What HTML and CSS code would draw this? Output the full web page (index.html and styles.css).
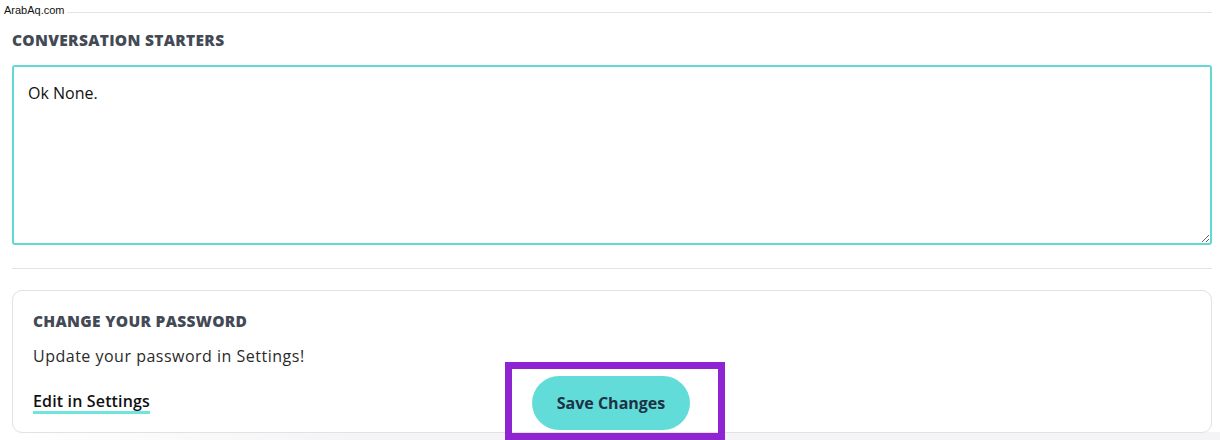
FILE: index.html
```html
<!DOCTYPE html>
<html>
<head>
<meta charset="utf-8">
<link rel="stylesheet" href="styles.css">
</head>
<body>
<div class="watermark">ArabAq.com</div>
<main class="page">
  <hr class="rule rule-top">
  <section class="starters">
    <h2 class="label">CONVERSATION STARTERS</h2>
    <textarea class="box">Ok None.</textarea>
  </section>
  <hr class="rule rule-mid">
  <section class="card">
    <h2 class="label">CHANGE YOUR PASSWORD</h2>
    <p class="desc">Update your password in Settings!</p>
    <a class="link" href="#">Edit in Settings</a>
  </section>
</main>
<div class="footer-shade"></div>
<button class="save">Save Changes</button>
<div class="highlight"></div>
</body>
</html>
```

FILE: styles.css
```css
html, body {
  margin: 0;
  padding: 0;
  background: #ffffff;
  height: 440px;
  overflow: hidden;
}
body {
  font-family: "Open Sans", "DejaVu Sans", sans-serif;
  color: #222;
  position: relative;
}
.watermark {
  position: absolute;
  left: 4px;
  top: 4px;
  font-family: "Liberation Sans", Arial, sans-serif;
  font-size: 11px;
  line-height: 13px;
  color: #111;
  background: #fff;
  padding-right: 2px;
  z-index: 3;
}
.page {
  padding: 0 8px 0 12px;
  position: relative;
  z-index: 1;
}
.rule {
  border: 0;
  height: 1px;
  background: #e3e3e6;
  margin: 0;
}
.rule-top { margin-top: 12px; }
.label {
  margin: 0;
  font-size: 15.5px;
  line-height: 20px;
  font-weight: 800;
  color: #434a55;
  letter-spacing: 0.3px;
}
.starters .label { margin-top: 17px; }
.box {
  display: block;
  box-sizing: border-box;
  width: 100%;
  height: 180px;
  margin-top: 15px;
  border: 2px solid #62d8d3;
  border-radius: 3px;
  padding: 16px 14px;
  font-family: inherit;
  font-size: 16px;
  line-height: 20px;
  color: #111;
  resize: vertical;
  outline: none;
}
.rule-mid { margin-top: 23px; }
.card {
  margin-top: 21px;
  box-sizing: border-box;
  height: 143px;
  border: 1px solid #e1e1e6;
  border-radius: 10px;
  padding: 20px 20px 0 20px;
  background: #fff;
}
.desc {
  margin: 15px 0 0;
  font-size: 16px;
  line-height: 20px;
  color: #2a2a2a;
  letter-spacing: 0.5px;
}
.link {
  display: inline-block;
  margin-top: 25px;
  font-size: 16px;
  line-height: 20px;
  font-weight: 600;
  color: #111;
  text-decoration: none;
  letter-spacing: 0.15px;
  border-bottom: 3px solid #6fe6dc;
}
.footer-shade {
  position: absolute;
  left: 0;
  right: 0;
  top: 432px;
  height: 8px;
  background: linear-gradient(to right, #ffffff 0%, #f4f4f6 30%, #f4f4f6 100%);
  z-index: 0;
}
.save {
  position: absolute;
  left: 532px;
  top: 376px;
  width: 158px;
  height: 54px;
  border: 0;
  border-radius: 27px;
  background: #62dcd8;
  color: #1b3345;
  font-family: inherit;
  font-size: 16px;
  font-weight: 700;
  z-index: 2;
}
.highlight {
  position: absolute;
  left: 505px;
  top: 362px;
  width: 206px;
  height: 64px;
  border: 7px solid #8e24d2;
  z-index: 3;
}
```
